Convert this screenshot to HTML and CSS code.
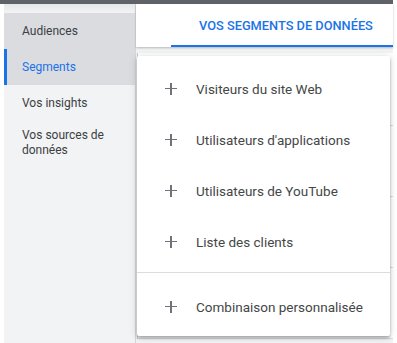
FILE: index.html
```html
<!DOCTYPE html>
<html lang="fr">
<head>
  <meta charset="UTF-8" />
  <title>Segments</title>
  <link rel="stylesheet" href="styles.css">
</head>
<body>
  <div class="topbar"></div>
  <div class="layout">
    <nav class="sidebar">
      <a class="nav-item hover">Audiences</a>
      <a class="nav-item active">Segments</a>
      <a class="nav-item">Vos insights</a>
      <a class="nav-item">Vos sources de données</a>
    </nav>

    <main class="main">
      <div class="tabs">
        <div class="tab selected">VOS SEGMENTS DE DONNÉES</div>
      </div>

      <div class="content">
        <!-- table behind the menu -->
        <div class="table-card">
          <div class="row head"></div>
          <div class="row"></div>
          <div class="row"></div>
          <div class="row"></div>
        </div>

        <!-- add segment menu -->
        <div class="menu">
          <div class="menu-group">
            <div class="menu-item"><span class="plus"></span>Visiteurs du site Web</div>
            <div class="menu-item"><span class="plus"></span>Utilisateurs d'applications</div>
            <div class="menu-item"><span class="plus"></span>Utilisateurs de YouTube</div>
            <div class="menu-item"><span class="plus"></span>Liste des clients</div>
          </div>
          <div class="menu-group last">
            <div class="menu-item"><span class="plus"></span>Combinaison personnalisée</div>
          </div>
        </div>
      </div>
    </main>
  </div>
</body>
</html>
```

FILE: styles.css
```css
body { margin: 0; background: #fff; font-family: Roboto, "Liberation Sans", sans-serif; color: #3c4043; }
.topbar { height: 4px; width: 393px; background: #5f6368; }
.layout { display: flex; height: 339px; width: 393px; }

.sidebar { margin-left: 4px; width: 131px; flex: none; background: #f1f3f4; padding-top: 9px; box-sizing: border-box;
  background-image: linear-gradient(#e4e6e8, #f1f3f4 9px); }
.nav-item { display: flex; align-items: center; min-height: 36px; padding: 7px 16px 7px 18px; box-sizing: border-box;
  font-size: 12px; line-height: 15px; color: #3c4043; }
.nav-item.hover { background: #dadce0; }
.nav-item.active { background: #dadce0; color: #1a73e8; border-left: 3px solid #1a73e8; padding-left: 15px; }

.main { flex: 1; position: relative; border-left: 1px solid #d5d7da; display: flex; flex-direction: column; }
.tabs { height: 44px; display: flex; box-shadow: 0 1px 2px rgba(0,0,0,0.25); position: relative; z-index: 1; background: #fff; }
.tab { margin-left: 35px; flex: 1; display: flex; align-items: center; padding: 2px 0 0 28px; box-sizing: border-box;
  font-size: 12.8px; font-weight: 500; color: #1a73e8; }
.tab.selected { border-bottom: 2px solid #1a73e8; }

.content { flex: 1; position: relative; background: #f1f3f4; padding: 6px 0 4px 1px; }
.table-card { background: #fff; height: 100%; border-left: 1px solid #c8cacd; }
.row { height: 70px; border-bottom: 1px solid #dadce0; }
.row.head { height: 72px; }

.menu { position: absolute; left: 1px; top: 9px; width: 253px; height: 280px; background: #fff; border-radius: 2px;
  box-shadow: 0 2px 3px rgba(0,0,0,0.3), 0 1px 8px rgba(0,0,0,0.15); box-sizing: border-box; }
.menu-group { padding: 7px 0 5px; border-bottom: 1px solid #dadce0; }
.menu-group.last { border-bottom: none; padding: 8px 0 0; }
.menu-item { height: 51px; display: flex; align-items: center; padding-left: 28px; font-size: 13.5px; color: #444746; }
.plus { width: 12px; height: 12px; margin-right: 19px; position: relative; flex: none; }
.plus::before, .plus::after { content: ""; position: absolute; background: #6f7378; }
.plus::before { left: 0; right: 0; top: 5px; height: 1.5px; }
.plus::after { top: 0; bottom: 0; left: 5px; width: 1.5px; }
```
